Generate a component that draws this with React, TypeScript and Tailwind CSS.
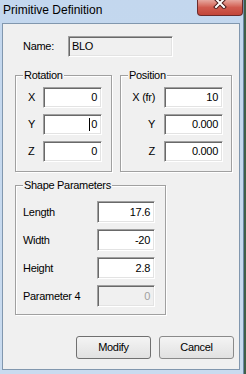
import React from "react";

const font = { fontFamily: '"Liberation Sans", Arial, sans-serif' };

function Field({
  value,
  width,
  height = "h-[21px]",
  disabled,
  readOnly,
  caret,
  align = "right",
}: {
  value: string;
  width: string;
  height?: string;
  disabled?: boolean;
  readOnly?: boolean;
  caret?: boolean;
  align?: "left" | "right";
}) {
  const look = disabled
    ? "bg-[#f0f0f0] text-[#a0a0a0]"
    : readOnly
    ? "bg-[#f0f0f0] text-black"
    : "bg-white text-black";
  return (
    <div
      className={`${width} ${height} flex items-center border border-t-[#a0a0a0] border-l-[#a0a0a0] border-b-white border-r-white shadow-[inset_1px_1px_0_#696969,inset_-1px_-1px_0_#e3e3e3] ${look} ${
        align === "right" ? "justify-end pr-[4px]" : "justify-start pl-[3px]"
      }`}
    >
      {caret && <span className="w-px h-[13px] bg-black mr-px" />}
      <span>{value}</span>
    </div>
  );
}

function Group({
  title,
  className,
  children,
}: {
  title: string;
  className: string;
  children: React.ReactNode;
}) {
  return (
    <fieldset
      className={`${className} border border-[#a0a0a0] p-0 shadow-[inset_1px_1px_0_white,1px_1px_0_white]`}
    >
      <legend className="ml-[7px] px-px leading-[13px] bg-[#f0f0f0]">{title}</legend>
      {children}
    </fieldset>
  );
}

export default function App() {
  const rotation = [
    { label: "X", value: "0" },
    { label: "Y", value: "0", caret: true },
    { label: "Z", value: "0" },
  ];
  const position = [
    { label: "X (fr)", value: "10" },
    { label: "Y", value: "0.000" },
    { label: "Z", value: "0.000" },
  ];
  const params = [
    { label: "Length", value: "17.6" },
    { label: "Width", value: "-20" },
    { label: "Height", value: "2.8" },
    { label: "Parameter 4", value: "0", disabled: true },
  ];

  return (
    <div className="w-[246px] h-[374px] flex" style={font}>
      <div className="w-[244px] h-full flex flex-col bg-gradient-to-b from-[#c3d7ee] to-[#c9dbef] border-r border-[#6e8aa6]">
        {/* title bar */}
        <div className="h-[23px] flex items-start justify-between">
          <div className="pl-[3px] pt-[3px] text-[12px] leading-[14px] text-black">
            Primitive Definition
          </div>
          <div className="w-[46px] h-[16px] rounded-b-[4px] border border-t-0 border-[#6b2b2b] bg-gradient-to-b from-[#e6a79f] via-[#d05a4e] to-[#c2463a] flex items-start justify-center">
            <svg width="14" height="10" viewBox="0 0 14 10" className="mt-[-1px]">
              <path d="M3 0 L11 8 M11 0 L3 8" stroke="#4a1b1b" strokeWidth="4" strokeLinecap="square" />
              <path d="M3 0 L11 8 M11 0 L3 8" stroke="white" strokeWidth="2" strokeLinecap="square" />
            </svg>
          </div>
        </div>

        {/* client */}
        <div className="flex-1 pl-[2px] pr-[3px] pb-[4px] flex">
          <div className="flex-1 border border-[#8197ae] bg-[#f0f0f0] text-[11px] tracking-[-0.3px] text-black pl-[12px] flex flex-col">
            <div className="mt-[12px] flex items-center">
              <span className="ml-[8px] w-[45px]">Name:</span>
              <Field value="BLO" width="w-[105px]" align="left" readOnly />
            </div>

            <div className="mt-[12px] flex">
              <Group title="Rotation" className="w-[97px]">
                <div className="pt-[5px] pb-[9px] flex flex-col gap-[6px]">
                  {rotation.map((r) => (
                    <div key={r.label} className="flex items-center">
                      <span className="ml-[12px] w-[15px]">{r.label}</span>
                      <Field value={r.value} width="w-[59px]" caret={r.caret} />
                    </div>
                  ))}
                </div>
              </Group>
              <Group title="Position" className="ml-[8px] w-[112px]">
                <div className="pt-[5px] pb-[9px] flex flex-col gap-[6px]">
                  {position.map((r) => (
                    <div key={r.label} className="flex items-center">
                      <span className="w-[43px] pr-[9px] text-right">{r.label}</span>
                      <Field value={r.value} width="w-[59px]" />
                    </div>
                  ))}
                </div>
              </Group>
            </div>

            <Group title="Shape Parameters" className="mt-[7px] w-[151px]">
              <div className="pt-[9px] pb-[7px] flex flex-col gap-[6px]">
                {params.map((r) => (
                  <div key={r.label} className="flex items-center">
                    <span className="ml-[7px] w-[74px]">{r.label}</span>
                    <Field value={r.value} width="w-[58px]" height="h-[22px]" disabled={r.disabled} />
                  </div>
                ))}
              </div>
            </Group>

            <div className="mt-[21px] pr-[5px] flex justify-end gap-[8px]">
              <button className="w-[75px] h-[23px] rounded-[3px] border border-[#707070] bg-gradient-to-b from-[#f4f4f4] to-[#e1e1e1] text-[11px]">
                Modify
              </button>
              <button className="w-[75px] h-[23px] rounded-[3px] border border-[#8a8a8a] bg-gradient-to-b from-[#f4f4f4] to-[#e1e1e1] text-[11px]">
                Cancel
              </button>
            </div>
          </div>
        </div>
      </div>
      <div className="w-[2px] h-full bg-[#3f5f48]" />
    </div>
  );
}
